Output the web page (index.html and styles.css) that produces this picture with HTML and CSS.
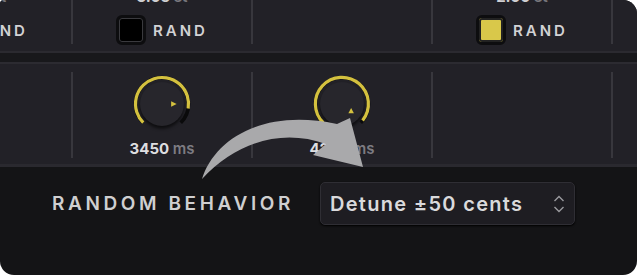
FILE: index.html
```html
<!DOCTYPE html>
<html lang="en">
<head>
  <meta charset="UTF-8" />
  <title>Random behavior</title>
  <link rel="stylesheet" href="styles.css">
</head>
<body>
  <div class="panel">
    <div class="strip">
      <div class="col"><span class="val">1.00 <em>st</em></span>
        <label class="rand"><span class="box"></span>RAND</label></div>
      <div class="col"><span class="val">3.05 <em>st</em></span>
        <label class="rand"><span class="box"></span>RAND</label></div>
      <div class="col"></div>
      <div class="col"><span class="val">2.00 <em>st</em></span>
        <label class="rand"><span class="box on"></span>RAND</label></div>
      <div class="col"></div>
    </div>
    <div class="gap"></div>
    <div class="knobs">
      <div class="col"></div>
      <div class="col">
        <svg class="knob" width="70" height="70" viewBox="0 0 70 70">
          <circle class="body" cx="35" cy="35" r="24"/>
          <path class="track" d="M14.5 55.5 A29 29 0 1 1 55.5 55.5"/>
          <path class="arc" d="M14.5 55.5 A29 29 0 1 1 63.6 40"/>
          <path class="tick" d="M45 32 L51 35 L45 38 Z"/>
        </svg>
        <div class="num">3450 <em>ms</em></div>
      </div>
      <div class="col">
        <svg class="knob" width="70" height="70" viewBox="0 0 70 70">
          <circle class="body" cx="35" cy="35" r="24"/>
          <path class="track" d="M14.5 55.5 A29 29 0 1 1 55.5 55.5"/>
          <path class="arc" d="M14.5 55.5 A29 29 0 1 1 57.5 53"/>
          <path class="tick" d="M42 45 L45 39.5 L48 45 Z"/>
        </svg>
        <div class="num">4200 <em>ms</em></div>
      </div>
      <div class="col"></div>
      <div class="col"></div>
    </div>
    <div class="behavior">
      <span class="label">RANDOM BEHAVIOR</span>
      <div class="select">
        <span>Detune ±50 cents</span>
        <svg width="12" height="20" viewBox="0 0 12 20">
          <path d="M1.5 7 L6 2.5 L10.5 7 M1.5 13 L6 17.5 L10.5 13" fill="none" stroke="#9a9a9e" stroke-width="1.4"/>
        </svg>
      </div>
    </div>
    <svg class="arrow" width="637" height="275" viewBox="0 0 637 275">
      <path d="M202 179 C214 140 262 108 337 124 L350 118 L363 167 L313 155 L326 144 C282 128 236 142 202 179 Z"/>
    </svg>
  </div>
</body>
</html>
```

FILE: styles.css
```css
body {
  margin: 0;
  background: #fff;
  font-family: Inter, "Noto Sans", sans-serif;
}
.panel {
  position: relative;
  width: 637px;
  height: 275px;
  overflow: hidden;
  background: #141416;
  border-radius: 4px 14px 14px 14px;
}
.strip, .knobs {
  display: flex;
  margin-left: -107px;
  background: #222127;
}
.strip {
  height: 51px;
  border-bottom: 2px solid #2b2a30;
}
.col {
  flex: 0 0 180px;
  display: flex;
  flex-direction: column;
  align-items: center;
  box-sizing: border-box;
  border-right: 2px solid #38373d;
}
.strip .col {
  height: 44px;
}
.val {
  margin-top: -13px;
  height: 15px;
  font-size: 15px;
  font-weight: 700;
  color: #cfcfd2;
}
em {
  font-style: normal;
  color: #77767c;
}
.rand {
  display: flex;
  align-items: center;
  gap: 7px;
  margin-top: 13px;
  font-size: 15px;
  font-weight: 600;
  letter-spacing: 3px;
  color: #d2d2d4;
}
.box {
  width: 24px;
  height: 24px;
  border: 3px solid #0d0d0f;
  border-radius: 6px;
  background: #000;
  box-shadow: inset 0 0 0 1px #3a3a3e;
}
.box.on {
  background: #d9c84a;
  box-shadow: inset 0 0 0 2px #222;
}
.gap {
  height: 9px;
  background: #18181b;
  border-bottom: 2px solid #2c2b31;
}
.knobs {
  padding: 8px 0 6px;
  border-bottom: 3px solid #2a292f;
}
.knobs .col {
  height: 86px;
}
.knob {
  margin-top: 0;
}
.knob .body {
  fill: #27262c;
  filter: drop-shadow(0 3px 2px rgba(0,0,0,.6));
}
.knob .track {
  fill: none;
  stroke: #0a0a0b;
  stroke-width: 4;
}
.knob .arc {
  fill: none;
  stroke: #d4c13f;
  stroke-width: 3.5;
}
.knob .tick {
  fill: #d4c13f;
}
.num {
  margin-top: 3px;
  font-size: 15px;
  font-weight: 700;
  color: #dedee0;
}
.num em {
  font-weight: 600;
  color: #7d7c82;
}
.behavior {
  display: flex;
  align-items: center;
  gap: 26px;
  padding: 15px 0 0 52px;
}
.label {
  font-size: 19px;
  font-weight: 600;
  letter-spacing: 3.6px;
  color: #cfcfd0;
}
.select {
  display: flex;
  align-items: center;
  justify-content: space-between;
  width: 255px;
  height: 43px;
  box-sizing: border-box;
  padding: 0 9px 0 9px;
  background: #1e1d22;
  border: 1px solid #2f2e34;
  border-radius: 5px;
  box-shadow: 0 1px 2px #000;
  font-size: 20px;
  font-weight: 600;
  letter-spacing: 1.3px;
  color: #dadadc;
}
.arrow {
  position: absolute;
  left: 0;
  top: 0;
  fill: #a9a9ab;
}
```
